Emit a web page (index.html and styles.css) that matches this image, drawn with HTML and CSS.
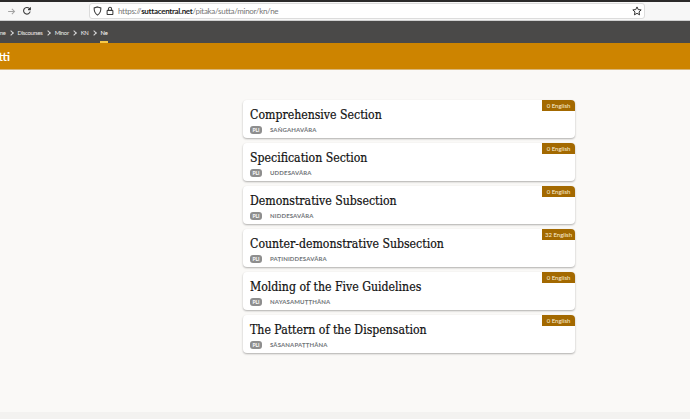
FILE: index.html
```html
<!DOCTYPE html>
<html lang="en">
<head>
<meta charset="utf-8">
<title>Netti</title>
<link rel="stylesheet" href="styles.css">
</head>
<body>
<div class="page">
  <div class="topline"></div>
  <div class="browser">
    <svg class="ico fwd" width="9" height="9" viewBox="0 0 12 12"><path d="M1.500 6H10M6.500 2.500 10 6 6.500 9.500" fill="none" stroke="#a3a3a3" stroke-width="1.4"/></svg>
    <svg class="ico reload" width="10" height="10" viewBox="0 0 12 12"><path d="M9.800 6.600A4 4 0 1 1 8.800 3L10 4.200M10 1.400v2.900H7.200" fill="none" stroke="#3a3a3a" stroke-width="1.3"/></svg>
    <div class="urlbar">
      <svg class="ico shield" width="9" height="10" viewBox="0 0 11 12"><path d="M5.500 1 9.600 2.200C9.800 6.200 8.600 9.200 5.500 11 2.400 9.200 1.200 6.200 1.400 2.200Z" fill="none" stroke="#3c3c3c" stroke-width="1.3"/></svg>
      <svg class="ico lock" width="8" height="10" viewBox="0 0 10 12"><path d="M3 5V3.400a2 2 0 0 1 4 0V5M2 5.200h6a.6.6 0 0 1 .6.6v4.100a.6.6 0 0 1-.6.6H2a.6.6 0 0 1-.6-.6V5.800a.6.6 0 0 1 .6-.6Z" fill="none" stroke="#3c3c3c" stroke-width="1.3"/></svg>
      <span class="url"><span class="dim">https://</span><b>suttacentral.net</b><span class="dim">/pitaka/sutta/minor/kn/ne</span></span>
      <svg class="ico star" width="10" height="10" viewBox="0 0 12 12"><path d="M6 1.100 7.500 4.300 11 4.700 8.400 7.100 9.100 10.600 6 8.800 2.900 10.600 3.600 7.100 1 4.700 4.500 4.300Z" fill="none" stroke="#333" stroke-width="1.2"/></svg>
    </div>
  </div>
  <nav class="crumbs">
    <span class="crumb first">Home</span><i class="sep"></i>
    <span class="crumb">Discourses</span><i class="sep"></i>
    <span class="crumb">Minor</span><i class="sep"></i>
    <span class="crumb">KN</span><i class="sep"></i>
    <span class="crumb active">Ne</span>
  </nav>
  <header class="banner"><span class="banner-title">Netti</span></header>
  <main class="content">
    <section class="card"><span class="badge">0 English</span><h2>Comprehensive Section</h2><p><span class="pli">PLI</span><span class="root">Saṅgahavāra</span></p></section>
    <section class="card"><span class="badge">0 English</span><h2>Specification Section</h2><p><span class="pli">PLI</span><span class="root">Uddesavāra</span></p></section>
    <section class="card"><span class="badge">0 English</span><h2>Demonstrative Subsection</h2><p><span class="pli">PLI</span><span class="root">Niddesavāra</span></p></section>
    <section class="card"><span class="badge">32 English</span><h2>Counter-demonstrative Subsection</h2><p><span class="pli">PLI</span><span class="root">Paṭiniddesavāra</span></p></section>
    <section class="card"><span class="badge">0 English</span><h2>Molding of the Five Guidelines</h2><p><span class="pli">PLI</span><span class="root">Nayasamuṭṭhāna</span></p></section>
    <section class="card"><span class="badge">0 English</span><h2>The Pattern of the Dispensation</h2><p><span class="pli">PLI</span><span class="root">Sāsanapaṭṭhāna</span></p></section>
  </main>
  <footer class="foot"></footer>
</div>
</body>
</html>
```
FILE: styles.css
```css
* { box-sizing: border-box; }
html, body { margin: 0; padding: 0; }
body { width: 690px; height: 419px; overflow: hidden; font-family: "Lato", sans-serif; background: #faf9f7; }
.page { display: flex; flex-direction: column; height: 419px; overflow: hidden; }
.topline { height: 2px; background: #2b2a2a; }
.browser { height: 19px; background: #f7f7f7; display: flex; align-items: center; padding: 0 45px 0 7px; border-bottom: 1px solid #d0d0d0; }
.ico { display: block; flex: none; }
.reload { margin-left: 6px; }
.urlbar { margin-left: 57px; flex: 1; height: 16px; background: #fff; border: 1px solid #dcdcdc; border-radius: 3px; display: flex; align-items: center; padding: 0 2px 0 3px; }
.lock { margin-left: 4px; }
.url { margin-left: 4px; font: 400 8px "Lato", sans-serif; letter-spacing: -.3px; color: #1d1d1d; flex: 1; white-space: nowrap; }
.url b { font-weight: 700; }
.dim { color: #767676; }
.crumbs { height: 22px; background: #4a4948; display: flex; align-items: center; margin-left: -9px; gap: 4px; color: #eceae8; font: 400 5.9px "Lato", sans-serif; letter-spacing: -.3px; }
.crumb { position: relative; height: 22px; line-height: 23px; }
.sep { width: 4px; height: 4px; margin: 1px 1px 0 -1px; border-top: 1px solid #d8d8d8; border-right: 1px solid #d8d8d8; transform: rotate(45deg); }
.active { color: #fff; }
.active::after { content: ""; position: absolute; left: -1px; right: -1px; bottom: 0; height: 2px; background: #f7c948; }
.banner { height: 27px; background: #cd8400; border-bottom: 1px solid #d9b678; display: flex; align-items: center; overflow: hidden; }
.banner-title { margin-left: -17px; color: #fff; font: 700 12px "Lato", sans-serif; }
.content { flex: 1; display: flex; flex-direction: column; gap: 5px; padding: 30px 115px 0 243px; }
.card { position: relative; height: 38px; background: #fff; border-radius: 4px; box-shadow: 0 1px 2px rgba(0,0,0,.3); padding: 7px 8px 0 7px; }
.card h2 { margin: 0; font: 400 12.2px/17px "DejaVu Serif Condensed", "DejaVu Serif", serif; color: #111; -webkit-text-stroke: .2px #111; }
.card p { margin: 1px 0 0; display: flex; align-items: center; height: 9px; }
.pli { width: 12px; height: 8px; border-radius: 3px; background: #8e8e8e; color: #fff; font: 700 5px/8px "Lato", sans-serif; text-align: center; }
.root { margin-left: 8px; font: 700 6px "Lato", sans-serif; letter-spacing: .15px; text-transform: uppercase; color: #6f7478; }
.badge { position: absolute; top: 0; right: 0; width: 33px; height: 11px; background: #a36900; color: #fbeed6; font: 400 6px/11px "Lato", sans-serif; text-align: center; border-radius: 0 4px 0 0; white-space: nowrap; }
.foot { height: 7px; background: #f3f2f0; }
```
